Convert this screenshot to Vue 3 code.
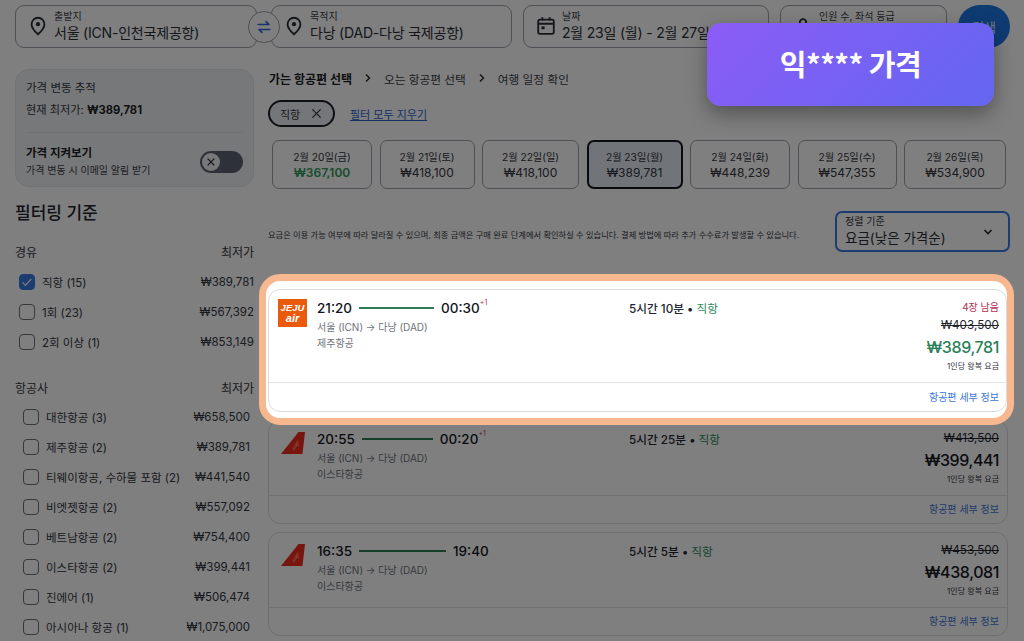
<script setup>
const dates = [
  { label: '2월 20일(금)', price: '₩367,100', cheap: true },
  { label: '2월 21일(토)', price: '₩418,100' },
  { label: '2월 22일(일)', price: '₩418,100' },
  { label: '2월 23일(월)', price: '₩389,781', active: true },
  { label: '2월 24일(화)', price: '₩448,239' },
  { label: '2월 25일(수)', price: '₩547,355' },
  { label: '2월 26일(목)', price: '₩534,900' }
]

const stops = [
  { name: '직항 (15)', price: '₩389,781', checked: true },
  { name: '1회 (23)', price: '₩567,392' },
  { name: '2회 이상 (1)', price: '₩853,149' }
]

const airlines = [
  { name: '대한항공 (3)', price: '₩658,500' },
  { name: '제주항공 (2)', price: '₩389,781' },
  { name: '티웨이항공, 수하물 포함 (2)', price: '₩441,540' },
  { name: '비엣젯항공 (2)', price: '₩557,092' },
  { name: '베트남항공 (2)', price: '₩754,400' },
  { name: '이스타항공 (2)', price: '₩399,441' },
  { name: '진에어 (1)', price: '₩506,474' },
  { name: '아시아나 항공 (1)', price: '₩1,075,000' }
]

const otherFlights = [
  { dep: '20:55', arr: '00:20', line: 71, plus: true, duration: '5시간 25분', airline: '이스타항공', old: '₩413,500', price: '₩399,441' },
  { dep: '16:35', arr: '19:40', line: 87, plus: false, duration: '5시간 5분', airline: '이스타항공', old: '₩453,500', price: '₩438,081' }
]
</script>

<template>
  <div class="page">
    <div class="search-row">
      <div class="field from">
        <svg class="field-icon" viewBox="0 0 24 24" width="22" height="22"><path d="M12 3a7 7 0 0 0-7 7c0 4.800 7 11 7 11s7-6.200 7-11a7 7 0 0 0-7-7z" fill="none" stroke="currentColor" stroke-width="2"/><circle cx="12" cy="10" r="2.300" fill="currentColor"/></svg>
        <div><div class="field-label">출발지</div><div class="field-value">서울 (ICN-인천국제공항)</div></div>
      </div>
      <div class="swap">
        <svg viewBox="0 0 24 24" width="20" height="20"><path d="M5 9h13M14.500 5.500 18 9M19 15H6M9.500 18.500 6 15" fill="none" stroke="currentColor" stroke-width="2" stroke-linecap="round" stroke-linejoin="round"/></svg>
      </div>
      <div class="field to">
        <svg class="field-icon" viewBox="0 0 24 24" width="22" height="22"><path d="M12 3a7 7 0 0 0-7 7c0 4.800 7 11 7 11s7-6.200 7-11a7 7 0 0 0-7-7z" fill="none" stroke="currentColor" stroke-width="2"/><circle cx="12" cy="10" r="2.300" fill="currentColor"/></svg>
        <div><div class="field-label">목적지</div><div class="field-value">다낭 (DAD-다낭 국제공항)</div></div>
      </div>
      <div class="field when">
        <svg class="field-icon" viewBox="0 0 24 24" width="22" height="22"><rect x="3.500" y="5" width="17" height="15.500" rx="2" fill="none" stroke="currentColor" stroke-width="2"/><path d="M3.500 9.500h17M8 2.500V6M16 2.500V6" stroke="currentColor" stroke-width="2"/><rect x="7" y="12.500" width="3.500" height="3" fill="currentColor"/></svg>
        <div><div class="field-label">날짜</div><div class="field-value">2월 23일 (월) - 2월 27일 (금)</div></div>
      </div>
      <div class="field who">
        <svg class="field-icon" viewBox="0 0 24 24" width="22" height="22"><circle cx="12" cy="8" r="3.500" fill="none" stroke="currentColor" stroke-width="2"/><path d="M5 20c0-4 3-6 7-6s7 2 7 6z" fill="none" stroke="currentColor" stroke-width="2"/></svg>
        <div><div class="field-label">인원 수, 좌석 등급</div><div class="field-value">성인 1명, 일반석</div></div>
      </div>
      <button class="search-btn">검색</button>
    </div>

    <div class="content">
      <aside class="sidebar">
        <div class="track-panel">
          <div class="track-title">가격 변동 추적</div>
          <div class="track-low">현재 최저가: <b>₩389,781</b></div>
          <div class="track-watch">
            <div>
              <div class="watch-title">가격 지켜보기</div>
              <div class="watch-sub">가격 변동 시 이메일 알림 받기</div>
            </div>
            <div class="toggle">
              <span class="knob">
                <svg viewBox="0 0 12 12" width="10" height="10"><path d="M2 2l8 8M10 2l-8 8" stroke="currentColor" stroke-width="1.500"/></svg>
              </span>
            </div>
          </div>
        </div>

        <h2 class="filter-title">필터링 기준</h2>

        <div class="filter-head"><span>경유</span><span>최저가</span></div>
        <div v-for="s in stops" :key="s.name" class="filter-row">
          <span class="check" :class="{ checked: s.checked }">
            <svg v-if="s.checked" viewBox="0 0 16 16" width="14" height="14"><path d="M3 8.500l3.300 3.300L13 4.500" fill="none" stroke="#fff" stroke-width="1.400"/></svg>
          </span>
          <span class="filter-name">{{ s.name }}</span>
          <span class="filter-price">{{ s.price }}</span>
        </div>

        <div class="filter-head second"><span>항공사</span><span>최저가</span></div>
        <div v-for="a in airlines" :key="a.name" class="filter-row airline">
          <span class="check"></span>
          <span class="filter-name">{{ a.name }}</span>
          <span class="filter-price">{{ a.price }}</span>
        </div>
      </aside>

      <main class="results">
        <div class="crumbs">
          <b>가는 항공편 선택</b>
          <svg viewBox="0 0 10 10" width="10" height="10"><path d="M3 1.500 6.500 5 3 8.500" fill="none" stroke="currentColor" stroke-width="1.400"/></svg>
          <span>오는 항공편 선택</span>
          <svg viewBox="0 0 10 10" width="10" height="10"><path d="M3 1.500 6.500 5 3 8.500" fill="none" stroke="currentColor" stroke-width="1.400"/></svg>
          <span>여행 일정 확인</span>
        </div>

        <div class="chips">
          <span class="chip">직항
            <svg viewBox="0 0 12 12" width="11" height="11"><path d="M1.500 1.500l9 9M10.500 1.500l-9 9" stroke="currentColor" stroke-width="1.400"/></svg>
          </span>
          <a class="clear">필터 모두 지우기</a>
        </div>

        <div class="date-strip">
          <div v-for="d in dates" :key="d.label" class="date-tile" :class="{ active: d.active }">
            <div class="date-label">{{ d.label }}</div>
            <div class="date-price" :class="{ cheap: d.cheap }">{{ d.price }}</div>
          </div>
        </div>

        <div class="sort-row">
          <p class="note">요금은 이용 가능 여부에 따라 달라질 수 있으며, 최종 금액은 구매 완료 단계에서 확인하실 수 있습니다. 결제 방법에 따라 추가 수수료가 발생할 수 있습니다.</p>
          <div class="sort-box">
            <div>
              <div class="sort-label">정렬 기준</div>
              <div class="sort-value">요금(낮은 가격순)</div>
            </div>
            <svg viewBox="0 0 12 12" width="12" height="12"><path d="M2.500 4 6 7.500 9.500 4" fill="none" stroke="currentColor" stroke-width="1.600"/></svg>
          </div>
        </div>

        <div class="flights">
          <div class="focus">
            <article class="flight">
              <div class="flight-body">
                <div class="jeju-logo"><span>JEJU</span><span>air</span></div>
                <div class="flight-info">
                  <div class="times">
                    <span>21:20</span>
                    <i class="line" style="width: 75px"></i>
                    <span class="arr">00:30<sup>+1</sup></span>
                  </div>
                  <div class="route">서울 (ICN) → 다낭 (DAD)</div>
                  <div class="route">제주항공</div>
                </div>
                <div class="duration">5시간 10분 <em>•</em> <span>직항</span></div>
                <div class="fare">
                  <div class="seats">4장 남음</div>
                  <div class="old">₩403,500</div>
                  <div class="price deal">₩389,781</div>
                  <div class="per">1인당 왕복 요금</div>
                </div>
              </div>
              <div class="flight-foot">항공편 세부 정보</div>
            </article>
          </div>

          <article v-for="f in otherFlights" :key="f.dep" class="flight">
            <div class="flight-body">
              <svg class="tail" viewBox="0 0 26 24" width="26" height="24"><path d="M25 1h-6.500L1 23h21.500z" fill="#ee2c1c"/><path d="M18 8l-6 11h3l1-3 3-1z" fill="#ff6a4c"/></svg>
              <div class="flight-info">
                <div class="times">
                  <span>{{ f.dep }}</span>
                  <i class="line" :style="{ width: f.line + 'px' }"></i>
                  <span class="arr">{{ f.arr }}<sup v-if="f.plus">+1</sup></span>
                </div>
                <div class="route">서울 (ICN) → 다낭 (DAD)</div>
                <div class="route">{{ f.airline }}</div>
              </div>
              <div class="duration">{{ f.duration }} <em>•</em> <span>직항</span></div>
              <div class="fare">
                <div class="old">{{ f.old }}</div>
                <div class="price">{{ f.price }}</div>
                <div class="per">1인당 왕복 요금</div>
              </div>
            </div>
            <div class="flight-foot">항공편 세부 정보</div>
          </article>
        </div>
      </main>
    </div>

    <div class="dim"></div>
    <div class="badge">익**** 가격</div>
  </div>
</template>

<style>
html, body {
  height: 100%;
  overflow: hidden;
  background: #fff;
}
</style>

<style scoped>
.page {
  position: relative;
  width: 1024px;
  height: 641px;
  overflow: hidden;
  box-sizing: border-box;
  padding: 5px 14px 0 15px;
  font-family: Inter, "Noto Sans CJK KR", sans-serif;
  color: #22252e;
  background: #fff;
}

.search-row {
  position: relative;
  display: flex;
  height: 43px;
}

.field {
  display: flex;
  align-items: center;
  gap: 5px;
  box-sizing: border-box;
  height: 43px;
  padding: 0 12px 2px 11px;
  margin-right: 11px;
  border: 1px solid #9aa0a8;
  border-radius: 9px;
  white-space: nowrap;
  overflow: hidden;
}

.from { width: 242px; margin-right: 14px; }
.to { width: 241px; }
.when { width: 246px; }
.who { width: 167px; }

.field-icon { flex: none; color: #2a2d35; }
.field-label { font-size: 10px; line-height: 14px; color: #3c4048; }
.field-value { font-size: 14px; line-height: 20px; letter-spacing: -0.2px; color: #2a2d35; }

.swap {
  position: absolute;
  left: 233px;
  top: 6px;
  display: flex;
  align-items: center;
  justify-content: center;
  box-sizing: border-box;
  width: 32px;
  height: 32px;
  border: 1px solid #9aa0a8;
  border-radius: 50%;
  background: #fff;
  color: #2a6ad8;
}

.search-btn {
  width: 52px;
  height: 43px;
  padding: 0;
  border: none;
  border-radius: 22px;
  background: #1f76e6;
  color: #e8eefc;
  font: inherit;
  font-size: 13px;
}

.content {
  display: flex;
  gap: 14px;
  margin-top: 21px;
}

.sidebar {
  flex: none;
  width: 239px;
}

.track-panel {
  box-sizing: border-box;
  height: 118px;
  padding: 10px 10px;
  background: #eff1f4;
  border: 1px solid #e2e4e8;
  border-radius: 14px;
}

.track-title {
  font-size: 11.500px;
  line-height: 16px;
  color: #33363f;
}

.track-low {
  margin-top: 6px;
  font-size: 11.200px;
  line-height: 16px;
  color: #33363f;
}

.track-low b { font-weight: 700; color: #1c1e25; }

.track-watch {
  display: flex;
  align-items: center;
  justify-content: space-between;
  margin-top: 14px;
  padding-top: 12px;
  border-top: 1px solid #e2e4e8;
}

.watch-title { font-size: 11.500px; line-height: 17px; font-weight: 700; color: #1c1e25; }
.watch-sub { font-size: 10px; line-height: 16px; color: #3a3d46; }

.toggle {
  display: flex;
  align-items: center;
  box-sizing: border-box;
  width: 43px;
  height: 22px;
  padding: 0 2px;
  border-radius: 11px;
  background: #5f6270;
}

.knob {
  display: flex;
  align-items: center;
  justify-content: center;
  width: 18px;
  height: 18px;
  border-radius: 50%;
  background: #f0f1f4;
  color: #22252e;
}

.filter-title {
  margin: 15px 0 0;
  font-size: 17px;
  line-height: 22px;
  font-weight: 500;
  color: #22252e;
}

.filter-head {
  display: flex;
  justify-content: space-between;
  margin-top: 21px;
  margin-bottom: 6px;
  font-size: 12px;
  line-height: 16px;
  color: #33363f;
}

.filter-head.second { margin-top: 24px; margin-bottom: 5px; }

.filter-row {
  display: flex;
  align-items: center;
  height: 30px;
  padding-left: 4px;
  font-size: 11.500px;
  color: #33363f;
}

.filter-row.airline { padding: 0 4px 0 8px; }

.check {
  flex: none;
  display: flex;
  align-items: center;
  justify-content: center;
  box-sizing: border-box;
  width: 16px;
  height: 16px;
  margin-right: 7px;
  border: 1.500px solid #6e7178;
  border-radius: 4px;
}

.check.checked {
  background: #3a78e0;
  border-color: #3a78e0;
}

.filter-name { flex: 1; white-space: nowrap; }
.filter-price { color: #33363f; }

.results {
  flex: 1;
  min-width: 0;
}

.crumbs {
  display: flex;
  align-items: center;
  gap: 7px;
  height: 18px;
  padding-left: 1px;
  font-size: 11.700px;
  color: #3a3d46;
}

.crumbs b { font-weight: 700; font-size: 12px; color: #1c1e25; }
.crumbs svg { margin: 0 4px; color: #22252e; }

.chips {
  display: flex;
  align-items: center;
  gap: 15px;
  margin-top: 13px;
}

.chip {
  display: flex;
  align-items: center;
  gap: 11px;
  box-sizing: border-box;
  width: 67px;
  height: 27px;
  padding: 0 10px;
  border: 2px solid #1c1e25;
  border-radius: 14px;
  background: #e8edf5;
  font-size: 11px;
  color: #33363f;
}

.clear {
  font-size: 11px;
  color: #2a62cf;
  text-decoration: underline;
}

.date-strip {
  display: grid;
  grid-template-columns: 100px 95px 97px 96px 100px 99px 102px;
  gap: 7.500px;
  margin: 13px 0 0 4px;
}

.date-tile {
  box-sizing: border-box;
  height: 49px;
  padding-top: 9px;
  border: 1px solid #9aa0a8;
  border-radius: 7px;
  text-align: center;
}

.date-tile.active {
  padding-top: 8px;
  border: 2px solid #14161c;
  background: #e3e8f2;
}

.date-label { font-size: 10.200px; line-height: 15px; color: #33363f; }
.date-price { font-size: 12px; line-height: 16px; color: #33363f; }
.date-price.cheap { font-weight: 600; color: #2e9a5c; }

.sort-row {
  display: flex;
  align-items: flex-end;
  justify-content: space-between;
  margin-top: 22px;
  height: 41px;
}

.note {
  margin: 0 0 11px;
  font-size: 8.250px;
  line-height: 12px;
  white-space: nowrap;
  color: #33363f;
}

.sort-box {
  flex: none;
  display: flex;
  align-items: center;
  justify-content: space-between;
  box-sizing: border-box;
  width: 175px;
  height: 41px;
  padding: 0 14px 0 8px;
  border: 2px solid #3a78e0;
  border-radius: 7px;
}

.sort-label { font-size: 10px; line-height: 13px; color: #33363f; }
.sort-value { font-size: 13.500px; line-height: 20px; color: #2a2d35; }

.flights {
  display: flex;
  flex-direction: column;
  gap: 8px;
  margin-top: 22px;
  padding-right: 2px;
}

.focus {
  position: relative;
  z-index: 20;
  margin: 0 -6px -13px -9px;
  padding: 8px 0 6px 2px;
  border: 7px solid #f8b88f;
  border-radius: 21px;
  background: #fff;
}

.focus .flight-body { padding-right: 7px; }
.focus .flight-foot { height: 28px; padding-right: 7px; line-height: 28px; }

.flight {
  border: 1px solid #d9dce2;
  border-radius: 12px;
  background: #fff;
}

.flight-body {
  display: flex;
  align-items: flex-start;
  padding: 0 8px 0 9px;
}

.jeju-logo {
  flex: none;
  display: flex;
  flex-direction: column;
  align-items: center;
  justify-content: center;
  box-sizing: border-box;
  width: 29px;
  height: 28px;
  margin: 9px 10px 0 0;
  background: #ea5a0d;
  color: #fff;
  font-family: "Liberation Sans", sans-serif;
  font-size: 9.500px;
  font-style: italic;
  font-weight: 700;
  line-height: 10.500px;
}

.jeju-logo span:last-child { font-size: 11px; }

.tail {
  flex: none;
  margin: 10px 11px 0 2px;
}

.flight-info {
  flex: none;
  width: 312px;
  padding-top: 8px;
}

.times {
  display: flex;
  align-items: center;
  gap: 7px;
  height: 20px;
  font-size: 13.500px;
  font-weight: 500;
  color: #14161c;
}

.line {
  display: block;
  height: 1.500px;
  background: #2f7d57;
}

.arr { position: relative; }

.arr sup {
  position: absolute;
  left: 100%;
  top: -2px;
  font-size: 7px;
  font-weight: 400;
  color: #b5334f;
}

.route {
  font-size: 10px;
  line-height: 16px;
  color: #6f737b;
}

.times + .route { margin-top: 1px; }

.duration {
  flex: none;
  padding-top: 10px;
  font-size: 11.700px;
  line-height: 18px;
  font-weight: 500;
  color: #22252e;
}

.duration em { font-style: normal; }
.duration span { font-weight: 400; color: #2e8a5c; }

.fare {
  margin-left: auto;
  padding: 9px 0 9px;
  text-align: right;
  white-space: nowrap;
}

.seats {
  margin-bottom: 2px;
  font-size: 10px;
  line-height: 16px;
  color: #b5334f;
}

.old {
  font-size: 11.700px;
  line-height: 17px;
  color: #22252e;
  text-decoration: line-through;
}

.price {
  font-size: 16px;
  line-height: 26px;
  font-weight: 500;
  letter-spacing: -0.4px;
  color: #14161c;
}

.price.deal { color: #2a8058; }

.per {
  font-size: 8px;
  line-height: 13px;
  color: #33363f;
}

.flight-foot {
  height: 27px;
  padding-right: 8px;
  border-top: 1px solid #e0e3e8;
  font-size: 10px;
  line-height: 27px;
  text-align: right;
  color: #3a76d8;
}

.dim {
  position: absolute;
  inset: 0;
  z-index: 10;
  background: rgba(0, 0, 0, 0.5);
}

.badge {
  position: absolute;
  left: 707px;
  top: 23px;
  z-index: 30;
  display: flex;
  align-items: center;
  justify-content: center;
  box-sizing: border-box;
  width: 287px;
  height: 83px;
  padding-bottom: 4px;
  border-radius: 14px;
  background: linear-gradient(135deg, #8b5cf6, #6366f1);
  box-shadow: 0 8px 20px rgba(0, 0, 0, 0.35);
  color: #fff;
  font-family: "Noto Sans CJK KR", sans-serif;
  font-size: 29px;
  font-weight: 700;
  letter-spacing: -0.5px;
}
</style>
